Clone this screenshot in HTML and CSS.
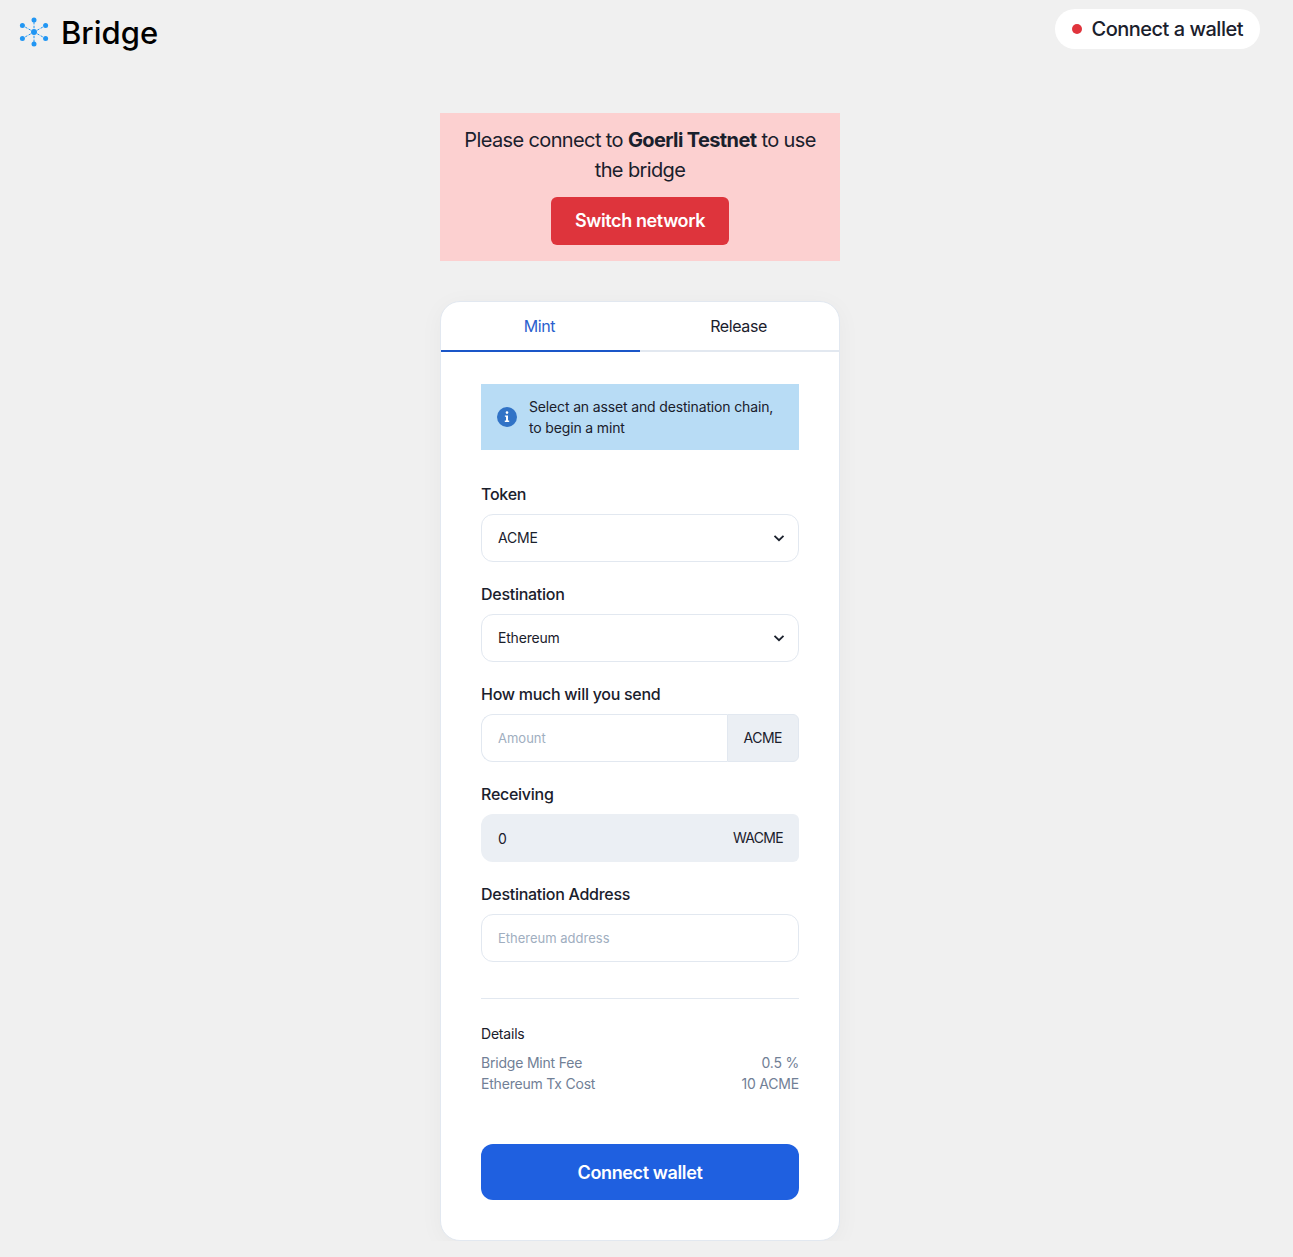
FILE: index.html
```html
<!DOCTYPE html>
<html lang="en">
<head>
<meta charset="UTF-8" />
<meta name="viewport" content="width=device-width, initial-scale=1" />
<title>Bridge</title>
<link rel="stylesheet" href="styles.css">
</head>
<body>

<header class="topbar">
  <div class="logo">
    <svg class="logo-mark" width="32" height="32" viewBox="0 0 32 32" aria-hidden="true">
      <g stroke="#2196f3" stroke-width="1" stroke-dasharray="2.4 1.4">
        <line x1="16" y1="15" x2="16" y2="3" />
        <line x1="16" y1="15" x2="16" y2="27" />
        <line x1="16" y1="15" x2="4.4" y2="8.5" />
        <line x1="16" y1="15" x2="27.6" y2="8.5" />
        <line x1="16" y1="15" x2="4.4" y2="21.5" />
        <line x1="16" y1="15" x2="27.6" y2="21.5" />
      </g>
      <g fill="#2196f3">
        <circle cx="16" cy="15" r="3" />
        <circle cx="16" cy="3" r="2.5" />
        <circle cx="16" cy="27" r="2.5" />
        <circle cx="4.4" cy="8.5" r="2.5" />
        <circle cx="27.6" cy="8.5" r="2.5" />
        <circle cx="4.4" cy="21.5" r="2.5" />
        <circle cx="27.6" cy="21.5" r="2.5" />
      </g>
    </svg>
    <span class="logo-text">Bridge</span>
  </div>
  <button class="wallet-pill"><span class="dot"></span>Connect a wallet</button>
</header>

<main class="page">
  <section class="banner">
    <p>Please connect to <strong>Goerli Testnet</strong> to use the bridge</p>
    <button class="switch-btn">Switch network</button>
  </section>

  <section class="card">
    <div class="tabs">
      <div class="tab active">Mint</div>
      <div class="tab">Release</div>
    </div>

    <div class="card-body">
      <div class="alert">
        <svg class="alert-icon" width="20" height="20" viewBox="0 0 20 20" aria-hidden="true">
          <circle cx="10" cy="10" r="10" fill="#3173c6" />
          <circle cx="10" cy="5.6" r="1.3" fill="#fff" />
          <path d="M7.9 8.4h3.1v5.2h1.2v1.4H7.8v-1.4h1.2v-3.8H7.9z" fill="#fff" />
        </svg>
        <span>Select an asset and destination chain, to begin a mint</span>
      </div>

      <div class="field first">
        <label>Token</label>
        <div class="control select">ACME
          <svg width="12" height="8" viewBox="0 0 12 8" aria-hidden="true"><path d="M1.5 1.8 6 6.2l4.5-4.4" fill="none" stroke="#1a202c" stroke-width="1.8" /></svg>
        </div>
      </div>

      <div class="field">
        <label>Destination</label>
        <div class="control select">Ethereum
          <svg width="12" height="8" viewBox="0 0 12 8" aria-hidden="true"><path d="M1.5 1.8 6 6.2l4.5-4.4" fill="none" stroke="#1a202c" stroke-width="1.8" /></svg>
        </div>
      </div>

      <div class="field">
        <label>How much will you send</label>
        <div class="input-group">
          <div class="control addon-input placeholder">Amount</div>
          <div class="addon">ACME</div>
        </div>
      </div>

      <div class="field">
        <label>Receiving</label>
        <div class="readonly">
          <span>0</span>
          <span class="readonly-unit">WACME</span>
        </div>
      </div>

      <div class="field">
        <label>Destination Address</label>
        <div class="control placeholder">Ethereum address</div>
      </div>

      <hr class="divider" />

      <div class="details">
        <div class="details-title">Details</div>
        <div class="details-row"><span>Bridge Mint Fee</span><span>0.5 %</span></div>
        <div class="details-row"><span>Ethereum Tx Cost</span><span>10 ACME</span></div>
      </div>

      <button class="connect-btn">Connect wallet</button>
    </div>
  </section>
</main>

</body>
</html>
```

FILE: styles.css
```css
* {
  box-sizing: border-box;
}
body {
  margin: 0;
  background: #f0f0f0;
  color: #1a202c;
  font-family: Inter, "Liberation Sans", sans-serif;
  font-size: 16px;
  letter-spacing: -0.2px;
}
button {
  font-family: inherit;
  border: none;
  cursor: pointer;
}

.topbar {
  display: flex;
  justify-content: space-between;
  align-items: flex-start;
  padding: 9px 33px 0 18px;
  height: 113px;
}
.logo {
  display: flex;
  align-items: center;
  gap: 11px;
  margin-top: 7px;
}
.logo-text {
  font-size: 31px;
  font-weight: 500;
  line-height: 34px;
  letter-spacing: 0;
  color: #000;
}
.wallet-pill {
  display: flex;
  align-items: center;
  gap: 10px;
  height: 40px;
  padding: 0 17px 0 16px;
  background: #fff;
  border-radius: 20px;
  color: #1a202c;
  font-size: 20px;
  font-weight: 500;
  letter-spacing: -0.5px;
}
.dot {
  width: 10px;
  height: 10px;
  border-radius: 50%;
  background: #e0343c;
  margin-left: 1px;
}

.page {
  width: 400px;
  margin: 0 auto;
  position: relative;
  left: -6.5px;
}

.banner {
  background: #fcd0d0;
  padding: 12px 16px 16px;
  text-align: center;
}
.banner p {
  margin: 0 0 12px;
  font-size: 20px;
  line-height: 30px;
  letter-spacing: -0.62px;
}
.switch-btn {
  height: 48px;
  padding: 0 24px 1px;
  background: #de343c;
  color: #fff;
  border-radius: 6px;
  font-size: 18px;
  font-weight: 600;
  letter-spacing: -0.38px;
}

.card {
  margin-top: 40px;
  background: #fff;
  border: 1px solid #e2e8f0;
  border-radius: 20px;
  box-shadow: 0 4px 24px rgba(0, 0, 0, 0.04);
  overflow: hidden;
}
.tabs {
  display: flex;
}
.tab {
  flex: 1;
  height: 50px;
  padding-right: 2px;
  display: flex;
  align-items: center;
  justify-content: center;
  border-bottom: 2px solid #e2e8f0;
  letter-spacing: -0.4px;
}
.tab.active {
  color: #2b5fce;
  border-bottom-color: #1a56c8;
}

.card-body {
  padding: 32px 40px 40px;
}

.alert {
  display: flex;
  align-items: center;
  gap: 12px;
  background: #b8dcf5;
  padding: 12px 16px;
  font-size: 14px;
  line-height: 21px;
  letter-spacing: -0.15px;
  color: #1a202c;
}
.alert-icon {
  flex: none;
}

.field {
  margin-top: 20px;
}
.field.first {
  margin-top: 32px;
}
.field label {
  display: block;
  margin-bottom: 8px;
  font-weight: 500;
  line-height: 24px;
  letter-spacing: -0.27px;
}
.control {
  display: flex;
  align-items: center;
  height: 48px;
  padding: 0 16px;
  background: #fff;
  border: 1px solid #e2e8f0;
  border-radius: 12px;
  font-size: 14px;
  line-height: 20px;
  letter-spacing: -0.2px;
}
.control svg {
  flex: none;
}
.select {
  justify-content: space-between;
  padding-right: 13px;
}
.placeholder {
  color: #a0aec0;
  font-size: 13px;
  letter-spacing: 0;
}
.input-group {
  display: flex;
}
.addon-input {
  flex: 1;
  border-radius: 12px 0 0 12px;
  border-right: none;
}
.addon {
  display: flex;
  align-items: center;
  padding: 0 16px 1px;
  background: #ebeff4;
  border: 1px solid #e2e8f0;
  border-radius: 0 6px 6px 0;
  font-size: 14px;
  letter-spacing: -0.5px;
}
.readonly {
  display: flex;
  justify-content: space-between;
  align-items: center;
  height: 48px;
  padding: 0 16px 0 17px;
  background: #ebeff4;
  border-radius: 12px 6px 6px 12px;
  font-size: 14px;
}
.readonly-unit {
  margin-top: -1px;
  letter-spacing: -0.7px;
}

.divider {
  margin: 36px 0 0;
  border: none;
  border-top: 1px solid #e2e8f0;
}

.details {
  margin-top: 24px;
  font-size: 14px;
  line-height: 21px;
}
.details-title {
  margin-bottom: 8px;
}
.details-row {
  display: flex;
  justify-content: space-between;
  color: #718096;
}

.connect-btn {
  display: block;
  width: 100%;
  height: 56px;
  padding-bottom: 1px;
  margin-top: 50px;
  background: #1f60e0;
  color: #fff;
  border-radius: 12px;
  font-size: 18px;
  font-weight: 600;
  letter-spacing: -0.38px;
}
```
